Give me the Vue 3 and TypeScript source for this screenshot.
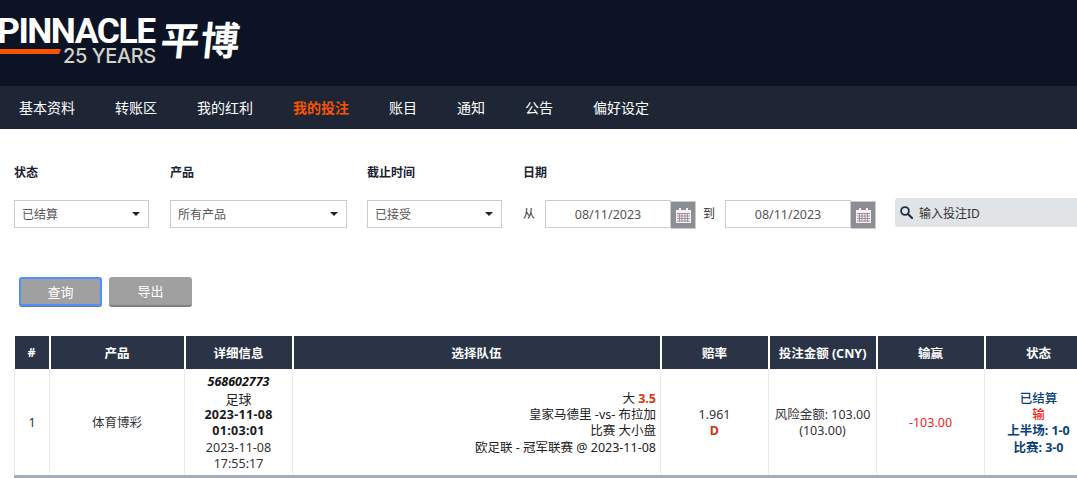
<template>
  <div class="page">
    <header class="brand">
      <div class="logo">
        <div class="logo-name">PINNACLE</div>
        <div class="logo-sub">
          <span class="logo-bar"></span>
          <span class="logo-years">25 YEARS</span>
        </div>
      </div>
      <div class="logo-cn">平博</div>
    </header>

    <nav class="nav">
      <a v-for="item in navItems" :key="item" class="nav-item" :class="{ active: item === '我的投注' }">{{ item }}</a>
    </nav>

    <section class="filters">
      <div class="field field-status">
        <label class="field-label">状态</label>
        <div class="select"><span>已结算</span><i class="caret"></i></div>
      </div>
      <div class="field field-product">
        <label class="field-label">产品</label>
        <div class="select"><span>所有产品</span><i class="caret"></i></div>
      </div>
      <div class="field field-status field-cutoff">
        <label class="field-label">截止时间</label>
        <div class="select"><span>已接受</span><i class="caret"></i></div>
      </div>
      <div class="field field-date">
        <label class="field-label">日期</label>
        <div class="date-row">
          <template v-for="d in dateInputs" :key="d">
            <span class="date-word">{{ d }}</span>
            <div class="date-input">08/11/2023</div>
            <div class="date-btn">
              <svg width="15" height="15" viewBox="0 0 15 15">
                <rect x="0" y="2" width="15" height="13" fill="#f6f2f2" />
                <rect x="3" y="0" width="2" height="4" fill="#f6f2f2" />
                <rect x="10" y="0" width="2" height="4" fill="#f6f2f2" />
                <path d="M1 5.5h13M1 8h13M1 10.5h13M1 13h13M3.5 5v9M6 5v9M9 5v9M11.5 5v9" stroke="#a08f9c" stroke-width="1" fill="none" />
              </svg>
            </div>
          </template>
        </div>
      </div>
      <div class="search">
        <svg width="13" height="13" viewBox="0 0 13 13" fill="none" stroke="#1f2d45" stroke-width="1.8">
          <circle cx="5" cy="5" r="3.9" />
          <path d="M8 8l4 4" stroke-linecap="round" stroke-width="2.2" />
        </svg>
        <span>输入投注ID</span>
      </div>
    </section>

    <div class="actions">
      <button class="btn btn-focus">查询</button>
      <button class="btn">导出</button>
    </div>

    <table class="bets">
      <colgroup>
        <col v-for="(w, i) in colWidths" :key="i" :style="{ width: w + 'px' }" />
      </colgroup>
      <thead>
        <tr>
          <th v-for="h in headers" :key="h">{{ h }}</th>
        </tr>
      </thead>
      <tbody>
        <tr>
          <td>1</td>
          <td>体育博彩</td>
          <td class="detail">
            <div class="bet-id">568602773</div>
            <div class="sport">足球</div>
            <div class="bold">2023-11-08</div>
            <div class="bold">01:03:01</div>
            <div>2023-11-08</div>
            <div>17:55:17</div>
          </td>
          <td class="selection">
            <div>大 <b class="red">3.5</b></div>
            <div>皇家马德里 -vs- 布拉加</div>
            <div>比赛 大小盘</div>
            <div>欧足联 - 冠军联赛 @ 2023-11-08</div>
          </td>
          <td>
            <div>1.961</div>
            <div class="red bold">D</div>
          </td>
          <td>
            <div>风险金额: 103.00</div>
            <div>(103.00)</div>
          </td>
          <td class="loss">-103.00</td>
          <td class="status">
            <div>已结算</div>
            <div class="loss">输</div>
            <div class="score">上半场: 1-0</div>
            <div class="score">比赛: 3-0</div>
          </td>
        </tr>
      </tbody>
    </table>
  </div>
</template>

<script setup lang="ts">
const navItems: string[] = ['基本资料', '转账区', '我的红利', '我的投注', '账目', '通知', '公告', '偏好设定']
const dateInputs: string[] = ['从', '到']
const headers: string[] = ['#', '产品', '详细信息', '选择队伍', '赔率', '投注金额 (CNY)', '输赢', '状态']
const colWidths: number[] = [35, 135, 108, 368, 108, 108, 108, 108]
</script>

<style scoped>
.page {
  width: 1077px;
  height: 478px;
  overflow: hidden;
  font-family: "Noto Sans", "Noto Sans CJK SC", sans-serif;
  font-size: 12.5px;
  color: #333;
}

.brand {
  height: 86px;
  background: #0c1324;
  display: flex;
  align-items: flex-start;
  box-sizing: border-box;
  padding-top: 13px;
  overflow: hidden;
}

.logo {
  width: 160px;
  margin-left: -3px;
  flex: none;
}

.logo-name {
  font-family: Roboto, sans-serif;
  font-weight: 700;
  font-size: 35.5px;
  line-height: 36px;
  letter-spacing: -1.5px;
  color: #fff;
  white-space: nowrap;
}

.logo-sub {
  display: flex;
  align-items: flex-start;
}

.logo-bar {
  width: 64px;
  height: 5px;
  background: #fa5400;
  clip-path: polygon(0 0, 100% 0, 97% 100%, 0 100%);
  flex: none;
}

.logo-years {
  font-family: Inter, sans-serif;
  font-weight: 500;
  font-size: 20px;
  line-height: 15px;
  letter-spacing: -0.4px;
  color: #d2d0c7;
  white-space: nowrap;
  margin-left: 2px;
}

.logo-cn {
  font-family: "Noto Sans CJK SC", sans-serif;
  font-weight: 700;
  font-size: 39px;
  line-height: 50px;
  letter-spacing: 1px;
  color: #fff;
  margin-left: 4px;
  white-space: nowrap;
  transform: skewX(-6deg);
}

.nav {
  height: 43px;
  background: #1e2636;
  display: flex;
  align-items: center;
  padding-left: 19px;
  gap: 40px;
}

.nav-item {
  font-size: 14px;
  color: #fff;
  line-height: 43px;
  font-family: "Noto Sans CJK SC", sans-serif;
}

.nav-item.active {
  color: #fa5400;
  font-weight: 700;
}

.filters {
  display: flex;
  align-items: flex-start;
  padding: 35px 0 0 14px;
  gap: 21px;
  white-space: nowrap;
}

.field {
  flex: none;
}

.field-status {
  width: 135px;
}

.field-product {
  width: 177px;
}

.field-cutoff {
  margin-left: -1px;
}

.field-label {
  display: block;
  font-weight: 700;
  font-size: 12px;
  line-height: 17px;
  color: #1a2233;
  margin-bottom: 19px;
}

.select {
  height: 28px;
  box-sizing: border-box;
  border: 1px solid #ccc;
  display: flex;
  align-items: center;
  justify-content: space-between;
  padding: 0 8px 0 7px;
  font-size: 12px;
  color: #555;
}

.caret {
  width: 0;
  height: 0;
  border-left: 4px solid transparent;
  border-right: 4px solid transparent;
  border-top: 4px solid #222;
}

.date-row {
  display: flex;
  align-items: flex-start;
  height: 28px;
}

.date-word {
  font-size: 12px;
  width: 22px;
  line-height: 28px;
  color: #333;
}

.date-word:not(:first-child) {
  margin-left: 7px;
}

.date-input {
  width: 126px;
  height: 28px;
  box-sizing: border-box;
  border: 1px solid #ccc;
  text-align: center;
  line-height: 27px;
  color: #555;
}

.date-btn {
  width: 25px;
  height: 28px;
  box-sizing: border-box;
  background: #8b8e93;
  border: 1px solid #ccc;
  border-left: none;
  display: flex;
  align-items: center;
  justify-content: center;
  margin-top: 1px;
}

.search {
  width: 220px;
  height: 29px;
  margin-top: 34px;
  margin-left: -2px;
  background: #e1e4e7;
  border-radius: 3px;
  display: flex;
  align-items: center;
  gap: 6px;
  padding-left: 5px;
  font-size: 12px;
  color: #333;
  flex: none;
}

.actions {
  display: flex;
  gap: 7px;
  padding: 49px 0 0 19px;
}

.btn {
  width: 83px;
  height: 30px;
  box-sizing: border-box;
  border: none;
  border-bottom: 2px solid #7f7f7f;
  border-radius: 3px;
  background: #a0a0a0;
  color: #fff;
  font-family: inherit;
  font-size: 13px;
  padding: 0 0 1px;
}

.btn-focus {
  border: 2px solid #4d90fe;
  box-shadow: 0 1px 0 #777;
  height: 29px;
}

.bets {
  margin: 29px 0 0 14px;
  border-collapse: collapse;
  table-layout: fixed;
  width: 1078px;
}

.bets th {
  background: #2a3446;
  color: #fff;
  height: 33px;
  padding: 0;
  font-size: 12.5px;
  font-weight: 700;
  border-right: 2px solid #fff;
  box-sizing: border-box;
}

.bets td {
  height: 107px;
  box-sizing: border-box;
  padding: 3px 4px 0;
  text-align: center;
  vertical-align: middle;
  line-height: 16.3px;
  border-right: 1px solid #e8eaec;
  border-left: 1px solid #e8eaec;
  border-bottom: 3px solid #a6adb8;
}

.bets td.selection {
  text-align: right;
  color: #222;
}

.bet-id {
  font-weight: 700;
  font-style: italic;
  color: #111;
}

.sport {
  color: #222;
  font-size: 13px;
  height: 16.3px;
}

.bold {
  font-weight: 700;
  letter-spacing: 0.3px;
  color: #1a1a1a;
}

.red.bold,
.red {
  color: #d2360f;
}

.bets .loss {
  color: #f01c1c;
}

.status {
  color: #0c3f78;
  font-weight: 500;
}

.score {
  font-weight: 700;
}
</style>

<style>
html,
body {
  margin: 0;
  overflow: hidden;
  background: #fff;
}
</style>
